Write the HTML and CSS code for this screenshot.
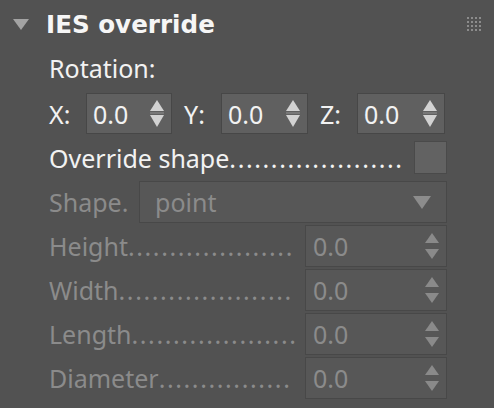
FILE: index.html
```html
<!DOCTYPE html>
<html>
<head>
<meta charset="utf-8">
<link rel="stylesheet" href="styles.css">
</head>
<body>
<div class="panel">
  <div class="header">
    <svg class="caret" width="16" height="11" viewBox="0 0 16 11"><polygon points="0,0 16,0 8,11" fill="#a3a3a3"/></svg>
    <span class="title">IES override</span>
    <svg class="grip" width="14" height="14" viewBox="0 0 14 14" fill="#8c8c8c">
      <rect x="0" y="0" width="2" height="2"/><rect x="4" y="0" width="2" height="2"/><rect x="8" y="0" width="2" height="2"/><rect x="12" y="0" width="2" height="2"/>
      <rect x="0" y="4" width="2" height="2"/><rect x="4" y="4" width="2" height="2"/><rect x="8" y="4" width="2" height="2"/><rect x="12" y="4" width="2" height="2"/>
      <rect x="0" y="8" width="2" height="2"/><rect x="4" y="8" width="2" height="2"/><rect x="8" y="8" width="2" height="2"/><rect x="12" y="8" width="2" height="2"/>
      <rect x="0" y="12" width="2" height="2"/><rect x="4" y="12" width="2" height="2"/><rect x="8" y="12" width="2" height="2"/><rect x="12" y="12" width="2" height="2"/>
    </svg>
  </div>
  <div class="body">
    <div class="row rot">Rotation:</div>
    <div class="row xyz">
      <span class="axis">X:</span>
      <div class="spin w86"><span class="val">0.0</span>
        <svg class="arrows" width="14" height="28" viewBox="0 0 14 28"><polygon points="7,0 14,11 0,11" fill="#d2d2d2"/><rect x="0" y="12.5" width="14" height="1" fill="#8f8f8f"/><polygon points="0,15 14,15 7,27" fill="#d2d2d2"/></svg>
      </div>
      <span class="axis">Y:</span>
      <div class="spin w87"><span class="val">0.0</span>
        <svg class="arrows" width="14" height="28" viewBox="0 0 14 28"><polygon points="7,0 14,11 0,11" fill="#d2d2d2"/><rect x="0" y="12.5" width="14" height="1" fill="#8f8f8f"/><polygon points="0,15 14,15 7,27" fill="#d2d2d2"/></svg>
      </div>
      <span class="axis">Z:</span>
      <div class="spin w88"><span class="val">0.0</span>
        <svg class="arrows" width="14" height="28" viewBox="0 0 14 28"><polygon points="7,0 14,11 0,11" fill="#d2d2d2"/><rect x="0" y="12.5" width="14" height="1" fill="#8f8f8f"/><polygon points="0,15 14,15 7,27" fill="#d2d2d2"/></svg>
      </div>
    </div>
    <div class="row over">
      <span class="lead">Override shape<span class="dots">.....................</span></span>
      <div class="check"></div>
    </div>
    <div class="row shape dis">
      <span class="slabel">Shape.</span>
      <div class="drop"><span class="val">point</span>
        <svg class="darrow" width="18" height="13" viewBox="0 0 18 13"><polygon points="0,0 18,0 9,13" fill="#8c8c8c"/></svg>
      </div>
    </div>
    <div class="row prop dis">
      <span class="lead">Height<span class="dots">....................</span></span>
      <div class="spin dspin"><span class="val">0.0</span>
        <svg class="arrows" width="14" height="27" viewBox="0 0 14 27"><polygon points="7,0 14,10 0,10" fill="#8a8a8a"/><polygon points="0,16 14,16 7,26" fill="#8a8a8a"/></svg>
      </div>
    </div>
    <div class="row prop dis">
      <span class="lead">Width<span class="dots">.....................</span></span>
      <div class="spin dspin"><span class="val">0.0</span>
        <svg class="arrows" width="14" height="27" viewBox="0 0 14 27"><polygon points="7,0 14,10 0,10" fill="#8a8a8a"/><polygon points="0,16 14,16 7,26" fill="#8a8a8a"/></svg>
      </div>
    </div>
    <div class="row prop dis">
      <span class="lead">Length<span class="dots">....................</span></span>
      <div class="spin dspin"><span class="val">0.0</span>
        <svg class="arrows" width="14" height="27" viewBox="0 0 14 27"><polygon points="7,0 14,10 0,10" fill="#8a8a8a"/><polygon points="0,16 14,16 7,26" fill="#8a8a8a"/></svg>
      </div>
    </div>
    <div class="row prop dis">
      <span class="lead">Diameter<span class="dots">................</span></span>
      <div class="spin dspin"><span class="val">0.0</span>
        <svg class="arrows" width="14" height="27" viewBox="0 0 14 27"><polygon points="7,0 14,10 0,10" fill="#8a8a8a"/><polygon points="0,16 14,16 7,26" fill="#8a8a8a"/></svg>
      </div>
    </div>
  </div>
</div>
</body>
</html>
```

FILE: styles.css
```css
html, body {
  margin: 0;
  padding: 0;
  background: #525252;
}
.panel {
  width: 494px;
  height: 408px;
  background: #525252;
  font-family: "Noto Sans", "DejaVu Sans", sans-serif;
  font-size: 25px;
  color: #f2f2f2;
}
.header {
  display: flex;
  align-items: center;
  height: 48px;
  padding: 0 13px 0 13px;
}
.caret {
  flex: none;
  margin-top: 1px;
}
.title {
  font-family: "DejaVu Sans", sans-serif;
  font-weight: bold;
  font-size: 24.6px;
  margin-left: 17px;
  flex: 1;
  color: #f6f6f6;
  margin-top: 0;
}
.grip {
  flex: none;
  margin-top: 0;
}
.body {
  padding: 0 47px 0 49px;
}
.row {
  display: flex;
  align-items: center;
  white-space: nowrap;
}
.rot {
  height: 40px;
}
.xyz {
  margin-top: 5px;
  height: 41px;
}
.axis {
  width: 37px;
  flex: none;
}
.spin {
  display: flex;
  align-items: center;
  box-sizing: border-box;
  height: 41px;
  background: #606060;
  border: 1px solid #474747;
  padding: 0 7px 0 6px;
  flex: none;
}
.w86 { width: 86px; margin-right: 12px; }
.w87 { width: 87px; margin-right: 12px; }
.w88 { width: 88px; }
.val {
  flex: 1;
}
.arrows {
  flex: none;
}
.over {
  margin-top: 7px;
  height: 33px;
}
.lead {
  flex: 1;
  min-width: 0;
  overflow: hidden;
}
.dots {
  letter-spacing: 1.6px;
}
.over .lead {
  margin-right: 10px;
}
.check {
  flex: none;
  box-sizing: border-box;
  width: 33px;
  height: 33px;
  background: #626262;
  border: 1px solid #4a4a4a;
}
.dis {
  color: #8b8b8b;
}
.shape {
  margin-top: 7px;
  height: 42px;
}
.slabel {
  width: 90px;
  flex: none;
}
.drop {
  flex: 1;
  display: flex;
  align-items: center;
  box-sizing: border-box;
  height: 42px;
  background: #575757;
  border: 1px solid #484848;
  padding: 0 15px 0 15px;
}
.darrow {
  flex: none;
}
.prop {
  margin-top: 2px;
  height: 42px;
}
.prop .lead {
  margin-right: 8px;
}
.dspin {
  width: 142px;
  height: 42px;
  background: #575757;
  border: 1px solid #484848;
  padding: 0 7px 0 7px;
}
```
